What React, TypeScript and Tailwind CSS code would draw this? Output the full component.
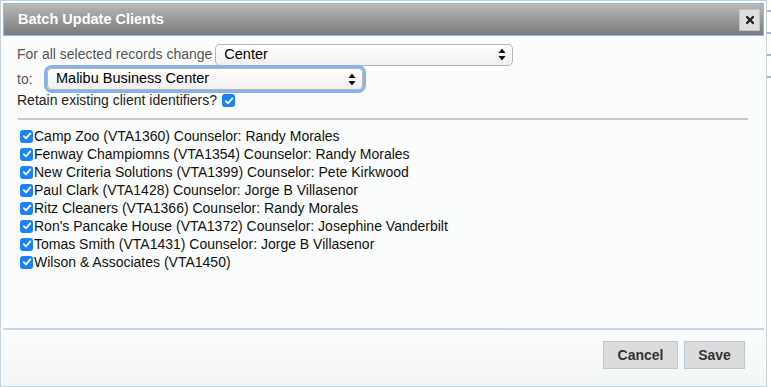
import { FaTimes } from "react-icons/fa";

const clients = [
  "Camp Zoo (VTA1360) Counselor: Randy Morales",
  "Fenway Champiomns (VTA1354) Counselor: Randy Morales",
  "New Criteria Solutions (VTA1399) Counselor: Pete Kirkwood",
  "Paul Clark (VTA1428) Counselor: Jorge B Villasenor",
  "Ritz Cleaners (VTA1366) Counselor: Randy Morales",
  "Ron's Pancake House (VTA1372) Counselor: Josephine Vanderbilt",
  "Tomas Smith (VTA1431) Counselor: Jorge B Villasenor",
  "Wilson & Associates (VTA1450)",
];

function Check() {
  return (
    <span className="inline-flex w-[13px] h-[13px] rounded-[3px] bg-[#1a82f7] items-center justify-center shrink-0">
      <svg width="10" height="10" viewBox="0 0 10 10">
        <path d="M1.8 5.2 L4 7.4 L8.3 2.4" fill="none" stroke="white" strokeWidth="1.8" strokeLinecap="round" strokeLinejoin="round" />
      </svg>
    </span>
  );
}

function Arrows() {
  return (
    <svg width="8" height="13" viewBox="0 0 8 13">
      <path d="M4 0.5 L7.5 5 L0.5 5 Z" fill="#111" />
      <path d="M4 12.5 L7.5 8 L0.5 8 Z" fill="#111" />
    </svg>
  );
}

function Select({ value, width, focused }: { value: string; width: string; focused?: boolean }) {
  return (
    <div className={`${width} h-[22px] rounded-[5px] border border-[#b5b5b5] bg-gradient-to-b from-white to-[#f0f0f0] flex items-center justify-between pl-[8px] pr-[6px] text-[14.5px] text-black ${focused ? "ring-[3px] ring-[#86b3ec] border-[#8fb4e4]" : ""}`}>
      <span>{value}</span>
      <Arrows />
    </div>
  );
}

export default function App() {
  return (
    <div className="w-[771px] h-[387px] bg-white flex overflow-hidden" style={{ fontFamily: '"Liberation Sans", Arial, sans-serif' }}>
      <div className="w-[767px] h-full border border-[#c4d4e4] bg-[#fbfdfd] flex flex-col pt-[2px] px-[2px]">
        <div className="h-[33px] border border-[#8bbbe6] bg-gradient-to-b from-[#b8b8b8] to-[#7a7a7a] flex items-center justify-between pl-[14px] pr-[3px]">
          <span className="text-white font-bold text-[14.5px]">Batch Update Clients</span>
          <div className="w-[21px] h-[22px] bg-[#dedede] border border-[#c4c4c4] flex items-center justify-center">
            <FaTimes className="text-[#222] w-[12px] h-[12px]" />
          </div>
        </div>

        <div className="flex flex-col pl-[14px] pr-[14px] pt-[7px] text-[14px] text-[#222]">
          <div className="flex items-center h-[23px]">
            <span className="text-[#555] mr-[3px]">For all selected records change</span>
            <Select value="Center" width="w-[298px]" />
          </div>
          <div className="flex items-center h-[24px] mt-[1px]">
            <span className="text-[#555] w-[30px]">to:</span>
            <Select value="Malibu Business Center" width="w-[316px]" focused />
          </div>
          <div className="flex items-center h-[19px] gap-[5px]">
            <span className="text-[14px]">Retain existing client identifiers?</span>
            <Check />
          </div>
          <div className="h-[2px] bg-[#c9c9c9] mt-[8px] mr-[2px] ml-[1px]" />
          <div className="flex flex-col pt-[7px] pl-[3px]">
            {clients.map((c) => (
              <div key={c} className="flex items-center h-[18px] gap-[1px] text-[14px] text-[#111]">
                <Check />
                <span>{c}</span>
              </div>
            ))}
          </div>
        </div>

        <div className="flex-1" />
        <div className="h-[2px] bg-[#c5d6e6]" />
        <div className="h-[56px] bg-gradient-to-b from-[#fbfdfd] to-[#f4f6f6] flex items-start justify-end gap-[6px] pt-[11px] pr-[19px]">
          <button className="w-[75px] h-[28px] bg-[#dcdcdc] border border-[#b9c9d9] text-[14px] font-bold text-[#333]">Cancel</button>
          <button className="w-[61px] h-[28px] bg-[#dcdcdc] border border-[#b9c9d9] text-[14px] font-bold text-[#333]">Save</button>
        </div>
      </div>
      <div className="w-[4px] h-full bg-white flex flex-col gap-[20px] pt-[10px]">
        <div className="h-[2px] bg-[#9fb8d8]" />
        <div className="h-[2px] bg-[#9fb8d8]" />
        <div className="h-[2px] bg-[#9fb8d8]" />
        <div className="h-[2px] bg-[#9fb8d8]" />
      </div>
    </div>
  );
}
